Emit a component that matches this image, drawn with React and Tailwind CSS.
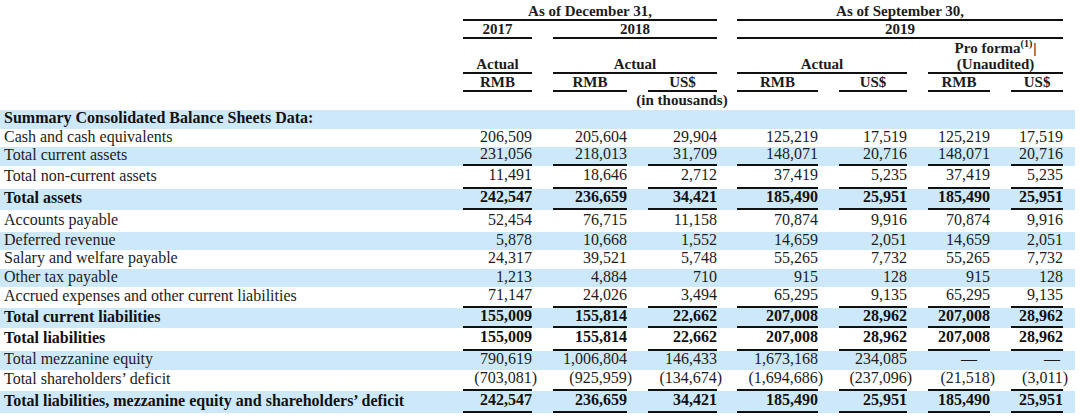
import React from "react";

const same1 = ["155,009", "155,814", "22,662", "207,008", "28,962", "207,008", "28,962"];
const tot = ["242,547", "236,659", "34,421", "185,490", "25,951", "185,490", "25,951"];

const rows = [
  { label: "Summary Consolidated Balance Sheets Data:", bold: true, blue: true, h: "h-[19px]", vals: null },
  { label: "Cash and cash equivalents", h: "h-[18px]", vals: ["206,509", "205,604", "29,904", "125,219", "17,519", "125,219", "17,519"] },
  { label: "Total current assets", blue: true, line: true, h: "h-[19px]", vals: ["231,056", "218,013", "31,709", "148,071", "20,716", "148,071", "20,716"] },
  { label: "Total non-current assets", line: true, h: "h-[23px]", vals: ["11,491", "18,646", "2,712", "37,419", "5,235", "37,419", "5,235"] },
  { label: "Total assets", bold: true, blue: true, line: true, h: "h-[21px]", vals: tot },
  { label: "Accounts payable", h: "h-[22px]", vals: ["52,454", "76,715", "11,158", "70,874", "9,916", "70,874", "9,916"] },
  { label: "Deferred revenue", blue: true, h: "h-[18px]", vals: ["5,878", "10,668", "1,552", "14,659", "2,051", "14,659", "2,051"] },
  { label: "Salary and welfare payable", h: "h-[19px]", vals: ["24,317", "39,521", "5,748", "55,265", "7,732", "55,265", "7,732"] },
  { label: "Other tax payable", blue: true, h: "h-[18px]", vals: ["1,213", "4,884", "710", "915", "128", "915", "128"] },
  { label: "Accrued expenses and other current liabilities", line: true, h: "h-[21px]", vals: ["71,147", "24,026", "3,494", "65,295", "9,135", "65,295", "9,135"] },
  { label: "Total current liabilities", bold: true, blue: true, line: true, h: "h-[20px]", vals: same1 },
  { label: "Total liabilities", bold: true, line: true, h: "h-[23px]", vals: same1 },
  { label: "Total mezzanine equity", blue: true, h: "h-[19px]", vals: ["790,619", "1,006,804", "146,433", "1,673,168", "234,085", "—", "—"] },
  { label: "Total shareholders’ deficit", line: true, h: "h-[21px]", vals: ["(703,081)", "(925,959)", "(134,674)", "(1,694,686)", "(237,096)", "(21,518)", "(3,011)"] },
  { label: "Total liabilities, mezzanine equity and shareholders’ deficit", bold: true, blue: true, line: true, h: "h-[22px]", vals: tot },
];

const colClasses = [
  "w-[463px]", "w-[69px]", "w-[21px]", "w-[74px]", "w-[21px]", "w-[69px]", "w-[20px]",
  "w-[81px]", "w-[21px]", "w-[68px]", "w-[21px]", "w-[62px]", "w-[21px]", "w-[52px]", "w-[12px]",
];

const L = "border-b-2 border-[#111]";

function Num({ v, i }) {
  if (v === "—") {
    return <span className={i === 5 ? "pr-[13px]" : "pr-[3px]"}>—</span>;
  }
  if (v.startsWith("(")) {
    return (
      <span>
        {v.slice(0, -1)}
        <span className="-mr-[5px]">)</span>
      </span>
    );
  }
  return <span>{v}</span>;
}

function Gap() {
  return <td className="p-0" />;
}

export default function App() {
  return (
    <div className="w-[1080px] h-[418px] bg-white overflow-hidden font-['Liberation_Serif','Times_New_Roman',serif] text-[#1c1c1c]">
      <table className="table-fixed border-separate border-spacing-0 w-[1075px]">
        <colgroup>
          {colClasses.map((c, i) => (
            <col key={i} className={c} />
          ))}
        </colgroup>
        <thead className="text-[15px] font-bold leading-[16px] text-center">
          <tr className="h-[21px]">
            <td className="p-0" />
            <td colSpan={5} className={`p-0 align-bottom ${L}`}>As of December 31,</td>
            <Gap />
            <td colSpan={7} className={`p-0 align-bottom ${L}`}>As of September 30,</td>
            <Gap />
          </tr>
          <tr className="h-[17px]">
            <td className="p-0" />
            <td className={`p-0 align-bottom ${L}`}>2017</td>
            <Gap />
            <td colSpan={3} className={`p-0 align-bottom ${L}`}>2018</td>
            <Gap />
            <td colSpan={7} className={`p-0 align-bottom ${L}`}>2019</td>
            <Gap />
          </tr>
          <tr className="h-[17px]">
            <td colSpan={11} className="p-0" />
            <td colSpan={3} className="p-0 align-bottom whitespace-nowrap">
              Pro forma<span className="relative -top-[6px] text-[10px] leading-[10px]">(1)</span>
              <span className="ml-[1px]">|</span>
            </td>
            <Gap />
          </tr>
          <tr className="h-[18px]">
            <td className="p-0" />
            <td className={`p-0 align-bottom ${L}`}>Actual</td>
            <Gap />
            <td colSpan={3} className={`p-0 align-bottom ${L}`}>Actual</td>
            <Gap />
            <td colSpan={3} className={`p-0 align-bottom ${L}`}>Actual</td>
            <Gap />
            <td colSpan={3} className={`p-0 align-bottom ${L}`}>(Unaudited)</td>
            <Gap />
          </tr>
          <tr className="h-[17px]">
            <td className="p-0" />
            <td className={`p-0 align-bottom ${L}`}>RMB</td>
            <Gap />
            <td className={`p-0 align-bottom ${L}`}>RMB</td>
            <Gap />
            <td className={`p-0 align-bottom ${L}`}>US$</td>
            <Gap />
            <td className={`p-0 align-bottom ${L}`}>RMB</td>
            <Gap />
            <td className={`p-0 align-bottom ${L}`}>US$</td>
            <Gap />
            <td className={`p-0 align-bottom ${L}`}>RMB</td>
            <Gap />
            <td className={`p-0 align-bottom ${L}`}>US$</td>
            <Gap />
          </tr>
          <tr className="h-[18px]">
            <td colSpan={4} className="p-0" />
            <td colSpan={3} className="p-0 align-top whitespace-nowrap">(in thousands)</td>
            <td colSpan={8} className="p-0" />
          </tr>
        </thead>
        <tbody className="text-[16px] leading-[14px]">
          {rows.map((r, ri) => (
            <tr key={ri} className={`${r.h} ${r.blue ? "bg-[#cde9f9]" : ""} ${r.bold ? "font-bold text-[#111]" : ""}`}>
              {r.vals ? (
                <>
                  <td className="p-0 pb-[3px] pl-[4px] align-middle whitespace-nowrap">{r.label}</td>
                  {r.vals.map((v, i) => (
                    <React.Fragment key={i}>
                      <td className={`p-0 pb-[3px] text-right align-middle whitespace-nowrap ${r.line ? L : ""}`}>
                        <Num v={v} i={i} />
                      </td>
                      <Gap />
                    </React.Fragment>
                  ))}
                </>
              ) : (
                <td colSpan={15} className="p-0 pb-[3px] pl-[4px] align-middle whitespace-nowrap">{r.label}</td>
              )}
            </tr>
          ))}
        </tbody>
      </table>
    </div>
  );
}
